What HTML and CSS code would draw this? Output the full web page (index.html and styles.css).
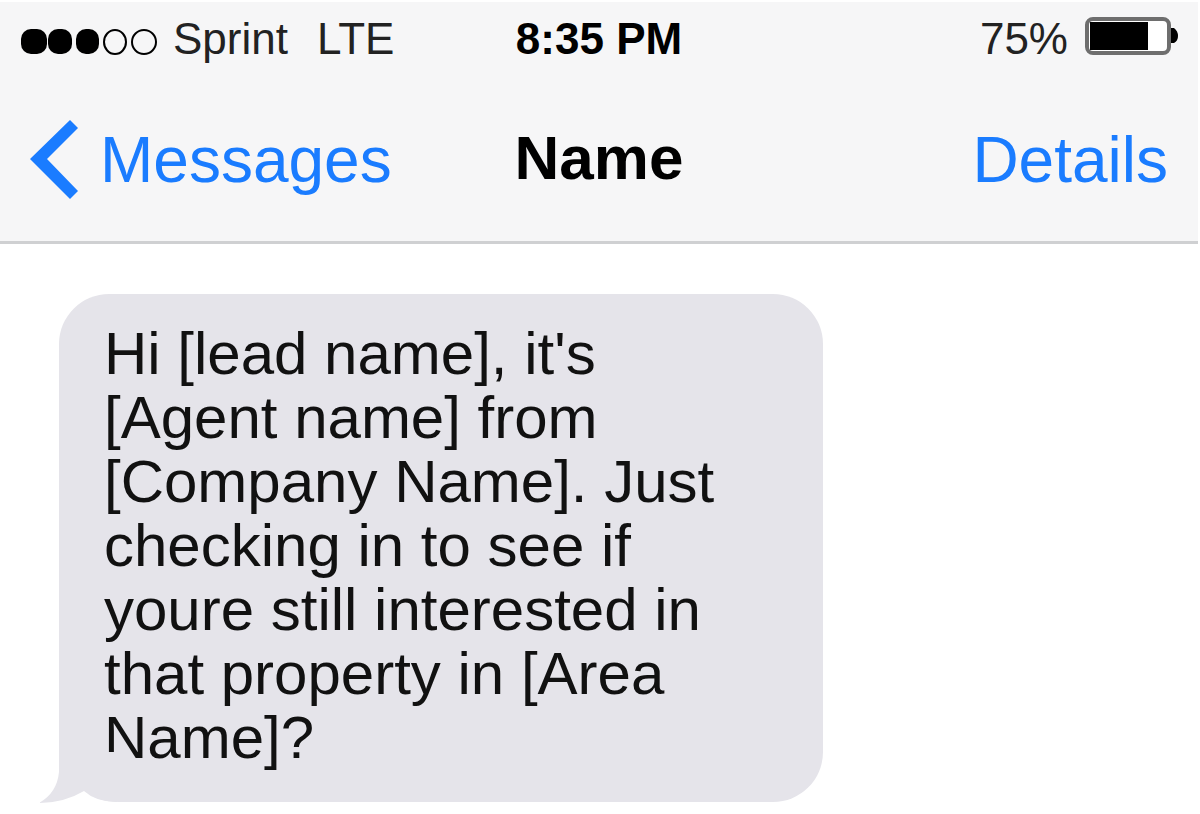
FILE: index.html
```html
<!DOCTYPE html>
<html lang="en">
<head>
    <meta charset="UTF-8">
    <meta name="viewport" content="width=device-width, initial-scale=1.0">
    <title>Messages</title>
    <link rel="stylesheet" href="styles.css">
</head>
<body>

    <!-- Header -->
    <header class="header">

        <!-- Status bar -->
        <div class="status-bar">
            <div class="carrier">
                <svg class="signal" width="138" height="28" viewBox="0 0 138 28" aria-hidden="true">
                    <rect x="1" y="1" width="26" height="25" rx="10"/>
                    <rect x="28" y="1" width="24" height="25" rx="10"/>
                    <rect x="56" y="1" width="23" height="25" rx="10"/>
                    <ellipse class="empty" cx="95" cy="14" rx="11" ry="12"/>
                    <ellipse class="empty" cx="124" cy="14" rx="12" ry="12"/>
                </svg>
                <span class="carrier-name">Sprint</span>
                <span>LTE</span>
            </div>
            <div class="time">8:35 PM</div>
            <div class="power">
                <span>75%</span>
                <svg class="battery" width="96" height="40" viewBox="0 0 96 40" aria-hidden="true">
                    <rect class="case" x="5" y="3" width="82" height="34" rx="6"/>
                    <rect x="8" y="6" width="58" height="28"/>
                    <path d="M89 12h3q4 3 4 8t-4 7h-3z"/>
                </svg>
            </div>
        </div>

        <!-- Navigation -->
        <nav class="nav-bar">
            <a class="back" href="#">
                <svg width="48" height="80" viewBox="0 0 48 80" aria-hidden="true">
                    <path d="M40 0L48 8L17 39L48 71L40 79L0 39Z"/>
                </svg>
                <span>Messages</span>
            </a>
            <h1>Name</h1>
            <a class="details" href="#">Details</a>
        </nav>
    </header>

    <!-- Conversation -->
    <main class="chat">
        <div class="bubble">
            <p>Hi [lead name], it's [Agent name] from [Company Name]. Just checking in to see if youre still interested in that property in [Area Name]?</p>
            <svg class="tail" width="80" height="52" viewBox="0 0 80 52" aria-hidden="true">
                <path class="cutout" d="M19 0H0V52H80V50Q58 50 45 38Q28 50 0 52Z"/>
                <path class="fill" d="M20 0V20Q18 41 0 51Q25 51 45 39Q57 50 78 50V0Z"/>
            </svg>
        </div>
    </main>

</body>
</html>
```

FILE: styles.css
```css
/* General styling */
* {
    margin: 0;
    padding: 0;
    box-sizing: border-box;
    font-family: "Liberation Sans", Arial, sans-serif;
}

body {
    background-color: #fff;
    color: #111;
}

/* Header styling */
.header {
    margin: 2px 2px 0 0;
    background-color: #f6f6f7;
    border-bottom: 3px solid #cfd0d2;
}

.status-bar,
.nav-bar {
    display: grid;
    grid-template-columns: 1fr auto 1fr;
    align-items: center;
}

/* Status bar styling */
.status-bar {
    padding: 13px 20px 0;
    font-size: 44px;
    line-height: 48px;
    color: #222;
}

.carrier,
.power {
    display: flex;
    align-items: center;
}

.signal {
    margin-top: 6px;
    margin-right: 15px;
}

.signal .empty {
    fill: none;
    stroke: #000;
    stroke-width: 2;
}

.carrier-name {
    margin-right: 29px;
}

.time {
    font-weight: bold;
    color: #000;
}

.power {
    justify-content: flex-end;
    gap: 14px;
}

.battery {
    margin-bottom: 6px;
}

.battery .case {
    fill: #fff;
    stroke: #6e6e6e;
    stroke-width: 4;
}

/* Navigation styling */
.nav-bar {
    padding: 54px 30px 38px;
    font-size: 64px;
    line-height: 82px;
}

.nav-bar a {
    color: #1a7cff;
    text-decoration: none;
}

.nav-bar h1 {
    font-size: 62px;
    color: #000;
    padding-bottom: 4px;
}

.back {
    display: flex;
    align-items: center;
    gap: 22px;
}

.back svg {
    fill: #1a7cff;
}

.details {
    justify-self: end;
}

/* Conversation styling */
.chat {
    padding: 50px 0 12px 59px;
}

.bubble {
    position: relative;
    width: 67%;
    padding: 28px 83px 32px 45px;
    background-color: #e5e4ea;
    border-radius: 50px;
    font-size: 60px;
    line-height: 64px;
}

.tail {
    position: absolute;
    left: -20px;
    bottom: -2px;
}

.tail .cutout {
    fill: #fff;
}

.tail .fill {
    fill: #e5e4ea;
}
```
